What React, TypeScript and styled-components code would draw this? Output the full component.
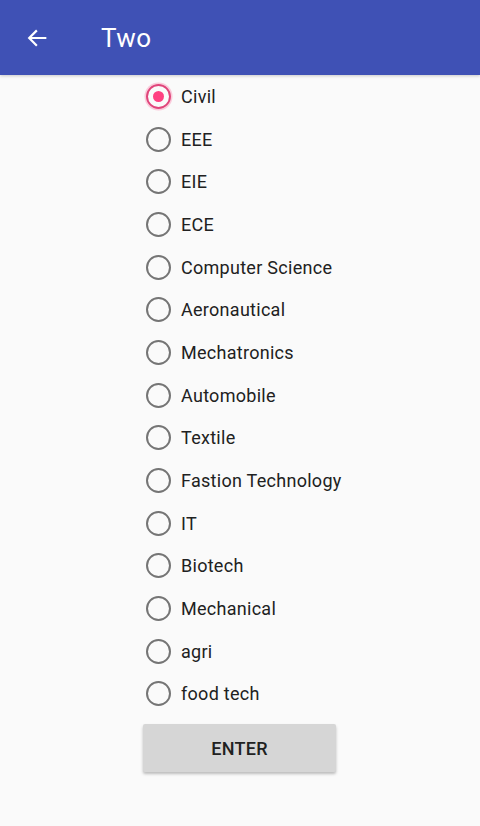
import React, { useState } from "react"
import styled, { createGlobalStyle } from "styled-components"

const Global = createGlobalStyle`
  html, body { margin: 0; padding: 0; background: #fafafa; }
  body { font-family: Roboto, "Liberation Sans", Arial, sans-serif; }
`

const Screen = styled.div`
  width: 480px;
  height: 826px;
  background: #fafafa;
  display: flex;
  flex-direction: column;
  overflow: hidden;
`

const AppBar = styled.header`
  height: 75px;
  flex: none;
  background: #3f51b5;
  display: flex;
  align-items: center;
  color: #fff;
  box-shadow: 0 1px 3px rgba(0, 0, 0, 0.2);
`

const BackButton = styled.button`
  width: 75px;
  height: 75px;
  border: none;
  background: none;
  padding: 0 0 0 26px;
  display: flex;
  align-items: center;
  color: #fff;
`

const Title = styled.h1`
  margin: 0 0 0 26px;
  font-size: 26px;
  font-weight: 400;
  letter-spacing: 0.4px;
`

const Form = styled.div`
  display: flex;
  flex-direction: column;
  align-items: flex-start;
  padding-left: 143px;
`

const Row = styled.label`
  height: 42.7px;
  display: flex;
  align-items: center;
  gap: 10px;
  font-size: 18px;
  letter-spacing: 0.28px;
  color: #212121;
  cursor: pointer;
`

const Circle = styled.span<{ $on: boolean }>`
  width: 25px;
  height: 25px;
  margin-left: 3px;
  box-sizing: border-box;
  border-radius: 50%;
  border: 2.6px solid ${p => (p.$on ? "#e0457b" : "#757575")};
  display: flex;
  align-items: center;
  justify-content: center;
  box-shadow: ${p => (p.$on ? "0 0 0 1.5px rgba(255, 64, 129, 0.25)" : "none")};
  &::after {
    content: "";
    width: 11px;
    height: 11px;
    border-radius: 50%;
    background: ${p => (p.$on ? "#ff4081" : "transparent")};
  }
`

const EnterButton = styled.button`
  margin-top: 9px;
  width: 193px;
  height: 48px;
  border: none;
  border-radius: 2px;
  background: #d6d6d6;
  box-shadow: 0 2px 3px rgba(0, 0, 0, 0.25);
  font-family: Roboto, "Liberation Sans", Arial, sans-serif;
  font-size: 18px;
  font-weight: 500;
  color: #212121;
  letter-spacing: 0.3px;
`

const branches = [
  "Civil", "EEE", "EIE", "ECE", "Computer Science", "Aeronautical",
  "Mechatronics", "Automobile", "Textile", "Fastion Technology", "IT",
  "Biotech", "Mechanical", "agri", "food tech",
]

export default function App() {
  const [picked, setPicked] = useState("Civil")
  return (
    <Screen>
      <Global />
      <AppBar>
        <BackButton aria-label="back">
          <svg width="22" height="22" viewBox="0 0 24 24" fill="none" stroke="#fff" strokeWidth="2.4" strokeLinecap="square">
            <path d="M21 12H4M11 4.5L3.5 12 11 19.5" />
          </svg>
        </BackButton>
        <Title>Two</Title>
      </AppBar>
      <Form>
        {branches.map(b => (
          <Row key={b} onClick={() => setPicked(b)}>
            <Circle $on={picked === b} />
            {b}
          </Row>
        ))}
        <EnterButton>ENTER</EnterButton>
      </Form>
    </Screen>
  )
}
